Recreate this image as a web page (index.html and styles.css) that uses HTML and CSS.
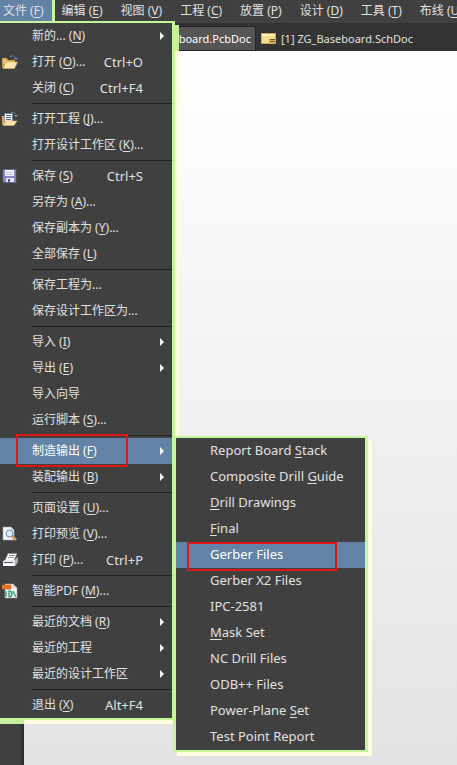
FILE: index.html
```html
<!DOCTYPE html>
<html lang="zh-CN">
<head>
<meta charset="utf-8">
<title>ZG_Baseboard</title>
<link rel="stylesheet" href="styles.css">
</head>
<body>
<div class="app">
  <nav class="menubar">
    <button class="top open">文件 (<u>F</u>)</button>
    <button class="top">编辑 (<u>E</u>)</button>
    <button class="top">视图 (<u>V</u>)</button>
    <button class="top">工程 (<u>C</u>)</button>
    <button class="top">放置 (<u>P</u>)</button>
    <button class="top">设计 (<u>D</u>)</button>
    <button class="top">工具 (<u>T</u>)</button>
    <button class="top">布线 (<u>U</u>)</button>
  </nav>
  <div class="tabs">
    <button class="tab active">ZG_Baseboard.PcbDoc</button>
    <button class="tab"><svg class="doc" viewBox="0 0 15 11"><path fill="#f4dc8c" stroke="#c9a95a" d="M.5.5h14v10H.5z"/><path fill="#fff0b8" d="M1 1h13v2H1z"/><path fill="#d9b662" d="M8 6h6v4H8z"/><path stroke="#6f5a2c" d="M9 6.500h5M9 8.500h5"/></svg>[1] ZG_Baseboard.SchDoc</button>
  </div>
  <main class="work"><aside class="dock"></aside><div class="canvas"></div></main>

  <div class="menu main">
    <button class="item"><span class="icon"></span><span class="label">新的... (<u>N</u>)</span><i class="arrow"></i></button>
    <button class="item"><span class="icon"><svg viewBox="0 0 16 16"><path fill="none" stroke="#7d93b8" stroke-dasharray="2 1" d="M8 3q4-3 6 2"/><path fill="#7d93b8" d="M12 4h4l-2 2z"/><path fill="#c99c50" d="M0 4h5l1 2h7v8H1L0 13z"/><path fill="#e8c07a" d="M1 5h3l1 2h7v3H1z"/><path fill="#ffe6ae" stroke="#d9ac62" stroke-width=".6" d="M4 8h11.500l-3 6.500H1z"/></svg></span><span class="label">打开 (<u>O</u>)...</span><kbd>Ctrl+O</kbd></button>
    <button class="item"><span class="icon"></span><span class="label">关闭 (<u>C</u>)</span><kbd>Ctrl+F4</kbd></button>
    <hr>
    <button class="item"><span class="icon"><svg viewBox="0 0 16 16"><path fill="none" stroke="#7d93b8" stroke-dasharray="2 1" d="M9 2q4-2 5 3"/><path fill="#7d93b8" d="M12 4h4l-2 2z"/><path fill="#d8ab5e" d="M0 5h3v9H1L0 13z"/><path fill="#f4f7fc" stroke="#66768f" stroke-width=".6" d="M2.500 2.500h8v9h-8z"/><path stroke="#536780" d="M4 4.500h5M4 6.500h5M4 8.500h5"/><path fill="#ffe6ae" stroke="#d9ac62" stroke-width=".6" d="M4 10h11l-3 4.500H1z"/></svg></span><span class="label">打开工程 (<u>J</u>)...</span></button>
    <button class="item"><span class="icon"></span><span class="label">打开设计工作区 (<u>K</u>)...</span></button>
    <hr>
    <button class="item"><span class="icon"><svg viewBox="0 0 16 16"><path fill="#8587bd" stroke="#6d6fa6" stroke-width=".6" d="M1 1.500h13v13H2L1 13z"/><path fill="#f3f4fb" d="M3 2h9v6H3z"/><path stroke="#c4c6e0" d="M4 4.500h7M4 6.500h7"/><path fill="#e3e5f3" d="M4 10h8v4H4z"/><path fill="#55578e" d="M6 11h2v3H6z"/></svg></span><span class="label">保存 (<u>S</u>)</span><kbd>Ctrl+S</kbd></button>
    <button class="item"><span class="icon"></span><span class="label">另存为 (<u>A</u>)...</span></button>
    <button class="item"><span class="icon"></span><span class="label">保存副本为 (<u>Y</u>)...</span></button>
    <button class="item"><span class="icon"></span><span class="label">全部保存 (<u>L</u>)</span></button>
    <hr>
    <button class="item"><span class="icon"></span><span class="label">保存工程为...</span></button>
    <button class="item"><span class="icon"></span><span class="label">保存设计工作区为...</span></button>
    <hr>
    <button class="item"><span class="icon"></span><span class="label">导入 (<u>I</u>)</span><i class="arrow"></i></button>
    <button class="item"><span class="icon"></span><span class="label">导出 (<u>E</u>)</span><i class="arrow"></i></button>
    <button class="item"><span class="icon"></span><span class="label">导入向导</span></button>
    <button class="item"><span class="icon"></span><span class="label">运行脚本 (<u>S</u>)...</span></button>
    <hr>
    <button class="item selected"><span class="icon"></span><span class="label">制造输出 (<u>F</u>)</span><i class="arrow"></i><span class="mark mark-main"></span></button>
    <button class="item"><span class="icon"></span><span class="label">装配输出 (<u>B</u>)</span><i class="arrow"></i></button>
    <hr>
    <button class="item"><span class="icon"></span><span class="label">页面设置 (<u>U</u>)...</span></button>
    <button class="item"><span class="icon"><svg viewBox="0 0 16 16"><path fill="#f5f8fc" stroke="#94a5bd" stroke-width=".6" d="M1 1h8l3 3v10H1z"/><path fill="#c4d2e4" d="M9 1v3h3z"/><path stroke="#d99b45" stroke-width="2.500" d="M10 10l4 4"/><circle cx="7.500" cy="7.500" r="3.500" fill="#d8ecfb" stroke="#6d86a8"/></svg></span><span class="label">打印预览 (<u>V</u>)...</span></button>
    <button class="item"><span class="icon"><svg viewBox="0 0 16 16"><path fill="#fff" stroke="#8b919b" stroke-width=".6" d="M6 1.500h9l-3 7H3z"/><path stroke="#9298a2" d="M7 3.500h6M6 5.500h6"/><path fill="#e8eaef" d="M3 8h10l3-3v5l-3 4H1V9z"/><path fill="#a5abb7" d="M13 8l3-3v5l-3 4z"/><path stroke="#545a66" d="M2 10.500h9"/><path fill="#fff" d="M2 12h9v2H2z"/></svg></span><span class="label">打印 (<u>P</u>)...</span><kbd>Ctrl+P</kbd></button>
    <hr>
    <button class="item"><span class="icon"><svg viewBox="0 0 16 16"><path fill="#f4f8f6" stroke="#99aaa4" stroke-width=".6" d="M3 1h8l4 4v10H3z"/><path fill="#c9dcd4" d="M11 1v4h4z"/><path fill="#e87526" stroke="#c85a18" stroke-width=".6" d="M0 2h9v4H0z"/><path fill="none" stroke="#3fa67c" stroke-width="1.500" d="M4 8v6M7 14V8q3 0 3 3t-3 3M11 8l3 6"/></svg></span><span class="label">智能PDF (<u>M</u>)...</span></button>
    <hr>
    <button class="item"><span class="icon"></span><span class="label">最近的文档 (<u>R</u>)</span><i class="arrow"></i></button>
    <button class="item"><span class="icon"></span><span class="label">最近的工程</span><i class="arrow"></i></button>
    <button class="item"><span class="icon"></span><span class="label">最近的设计工作区</span><i class="arrow"></i></button>
    <hr>
    <button class="item"><span class="icon"></span><span class="label">退出 (<u>X</u>)</span><kbd>Alt+F4</kbd></button>
  </div>

  <div class="menu sub">
    <button class="item">Report Board <u>S</u>tack</button>
    <button class="item">Composite Drill <u>G</u>uide</button>
    <button class="item"><u>D</u>rill Drawings</button>
    <button class="item"><u>F</u>inal</button>
    <button class="item selected">Gerber Files<span class="mark mark-sub"></span></button>
    <button class="item">Gerber X2 Files</button>
    <button class="item">IPC-2581</button>
    <button class="item"><u>M</u>ask Set</button>
    <button class="item">NC Drill Files</button>
    <button class="item">ODB++ Files</button>
    <button class="item">Power-Plane <u>S</u>et</button>
    <button class="item">Test Point Report</button>
  </div>
</div>
</body>
</html>
```
FILE: styles.css
```css
* { box-sizing: border-box; }
body {
  margin: 0;
  overflow: hidden;
  font: 12px/20px "Noto Sans", "Noto Sans CJK SC", sans-serif;
  color: #e0e0e0;
}
button {
  border: 0;
  margin: 0;
  padding: 0;
  background: none;
  font: inherit;
  color: inherit;
  text-align: left;
  white-space: nowrap;
}
u { text-underline-offset: 2px; }

.app {
  position: relative;
  display: flex;
  flex-direction: column;
  min-height: 100vh;
}
.menubar {
  display: flex;
  gap: 2px;
  height: 23px;
  overflow: hidden;
  background: #404040;
}
.top {
  flex: none;
  height: 21px;
  padding: 0 8px;
}
.top.open {
  padding-left: 3px;
  background: #6283a5;
  box-shadow: 3px 0 #c4f59b;
}

.tabs {
  display: flex;
  align-items: flex-end;
  height: 28px;
  background: #333;
}
.tab {
  display: flex;
  align-items: center;
  height: 25px;
  padding: 0 5px;
  font-size: 11px;
}
.tab.active {
  justify-content: flex-end;
  width: 256px;
  padding: 0 4px;
  border: 1px solid #242424;
  border-radius: 0 3px 0 0;
  background: #555;
  color: #fff;
}
.doc { width: 15px; height: 11px; margin-right: 5px; }

.work { display: flex; flex: 1; }
.dock {
  width: 24px;
  background: #404040;
  border-right: 3px solid #333;
}
.canvas { flex: 1; background: linear-gradient(#fff, #e3e3e3); }

.menu {
  position: absolute;
  display: flex;
  flex-direction: column;
  border: solid #c4f59b;
  border-width: 2px 3px;
  background: #404040;
  box-shadow: 4px 4px #ffffe0;
}
.menu.main {
  top: 21px;
  left: -4px;
  width: 179px;
  padding-left: 1px;
}
/* the glow turns green where it falls on the dark tab strip and dock */
.menu.main::before,
.menu.main::after {
  content: "";
  position: absolute;
  background: #c4f09c;
}
.menu.main::before { top: 2px; right: -7px; width: 4px; height: 26px; }
.menu.main::after { bottom: -6px; left: 0; width: 25px; height: 4px; }
.menu.sub {
  top: 436px;
  left: 173px;
  width: 195px;
}
.item {
  position: relative;
  display: flex;
  align-items: center;
  height: 26px;
}
.sub .item {
  display: block;
  padding: 0 0 2px 34px;
  font-size: 13px;
}
.selected { background: #6283a5; color: #fff; }
.icon { display: flex; width: 32px; padding-left: 2px; }
.icon svg { width: 16px; height: 16px; }
.label { flex: 1; }
kbd { margin-right: 29px; font: inherit; font-size: 13px; }
.arrow {
  margin-right: 8px;
  border: 4px solid transparent;
  border-left-color: #fff;
  border-right: 0;
}
hr {
  width: 140px;
  height: 1px;
  margin: 2px 0 2px auto;
  border: 0;
  background: #222;
}
.mark { position: absolute; border: 2px solid #e01414; }
.mark-main { left: 16px; top: -4px; width: 112px; height: 33px; }
.mark-sub { left: 11px; top: 0; width: 150px; height: 29px; z-index: 1; }
```
